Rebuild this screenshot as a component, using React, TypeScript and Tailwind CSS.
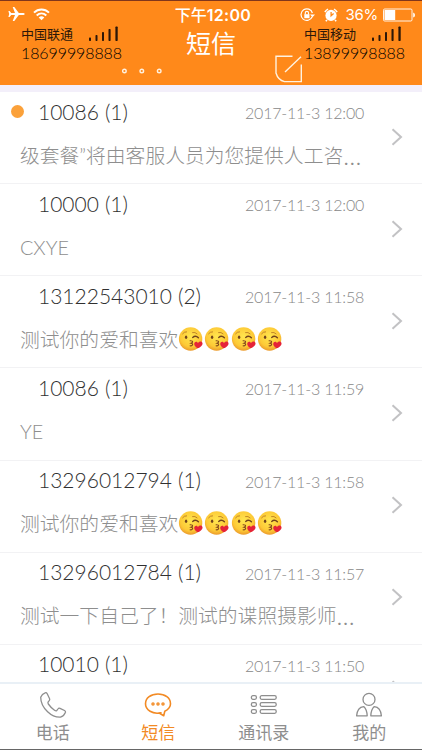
import type { ReactNode } from 'react';

type Message = {
  sender: string;
  count: number;
  date: string;
  text: string;
  truncated?: boolean;
  emojis?: number;
  unread?: boolean;
};

const messages: Message[] = [
  { sender: '10086', count: 1, date: '2017-11-3 12:00', text: '级套餐”将由客服人员为您提供人工咨', truncated: true, unread: true },
  { sender: '10000', count: 1, date: '2017-11-3 12:00', text: 'CXYE' },
  { sender: '13122543010', count: 2, date: '2017-11-3 11:58', text: '测试你的爱和喜欢', emojis: 4 },
  { sender: '10086', count: 1, date: '2017-11-3 11:59', text: 'YE' },
  { sender: '13296012794', count: 1, date: '2017-11-3 11:58', text: '测试你的爱和喜欢', emojis: 4 },
  { sender: '13296012784', count: 1, date: '2017-11-3 11:57', text: '测试一下自己了！测试的谍照摄影师', truncated: true },
  { sender: '10010', count: 1, date: '2017-11-3 11:50', text: '' },
];

function KissEmoji() {
  return (
    <svg width="26.2" height="26" viewBox="0 0 26 26" className="shrink-0">
      <defs>
        <radialGradient id="face" cx="0.5" cy="0.4" r="0.62">
          <stop offset="0" stopColor="#ffe64f" />
          <stop offset="0.7" stopColor="#fdc936" />
          <stop offset="1" stopColor="#e9952a" />
        </radialGradient>
      </defs>
      <circle cx="12.5" cy="13" r="11.7" fill="url(#face)" />
      <ellipse cx="8" cy="11.2" rx="1.2" ry="1.8" fill="#71431c" />
      <path d="M4.5 7.8Q6 5.6 8.5 5.8M14.5 6.5Q17 5.8 19 7.8" fill="none" stroke="#b97d25" strokeWidth="0.9" strokeLinecap="round" />
      <path d="M14.6 11.4Q17.5 8.8 20.3 11.8" fill="none" stroke="#71431c" strokeWidth="1.4" strokeLinecap="round" />
      <path d="M12 14.7Q15.2 14.6 14.3 16.4L12.8 17.2Q15.4 17.5 14.2 19.1Q13.5 20 12 19.8" fill="none" stroke="#80451b" strokeWidth="1.1" strokeLinecap="round" />
      <path d="M19.5 22.2C16.5 20.4 15.3 17.9 16.8 16.3C18 15.2 19.5 15.9 19.8 17.1C21 15 23.5 14.9 24.3 16.7C25.1 19 22.4 21.4 19.5 22.2Z" fill="#e52338" />
    </svg>
  );
}

function SignalBars() {
  return (
    <svg width="30" height="16" viewBox="0 0 30 16" className="shrink-0 fill-[#2c1708]">
      <rect x="0" y="11.5" width="2" height="3.5" rx="0.7" />
      <rect x="6.5" y="9" width="2" height="6" rx="0.7" />
      <rect x="13" y="6" width="2" height="9" rx="0.7" />
      <rect x="19.5" y="3" width="2.1" height="12" rx="0.7" />
      <rect x="26.4" y="0.5" width="2.3" height="14.5" rx="0.7" />
    </svg>
  );
}

function SimCard({ carrier, phone }: { carrier: string; phone: string }) {
  return (
    <div className="w-[101px] shrink-0 text-[#2c1708]">
      <div className="flex h-[16px] items-center justify-between pr-[3px]">
        <span className="whitespace-nowrap text-[13px] leading-[16px]">{carrier}</span>
        <SignalBars />
      </div>
      <div className="mt-px whitespace-nowrap font-['Lato',sans-serif] text-[16px] font-light leading-[20px] tracking-[-0.1px] text-black">
        {phone}
      </div>
    </div>
  );
}

function StatusBar() {
  return (
    <div className="grid h-[26px] grid-cols-[1fr_auto_1fr] items-center border-t border-[#81361b] pl-2 pr-[6px] text-white">
      <div className="flex items-center gap-[8px] pt-px">
        <svg width="17" height="16" viewBox="0 0 17 16" fill="white">
          <path d="M16.7 8C16.7 7.2 15.7 6.9 14.8 6.9H10.8L6.3 1.1H4.7L7 6.9H3.2L1.6 5H0.4L1.2 8L0.4 11H1.6L3.2 9.1H7L4.7 14.9H6.3L10.8 9.1H14.8C15.7 9.1 16.7 8.8 16.7 8Z" />
        </svg>
        <svg width="17" height="13" viewBox="0 0 17 13" fill="none" stroke="white" strokeWidth="2">
          <path d="M1 4.6C5.3 0.5 11.7 0.5 16 4.6M3.7 7.5C6.5 4.9 10.5 4.9 13.3 7.5" />
          <path d="M5.7 9.5Q8.5 7.2 11.3 9.5L8.5 12.3Z" fill="white" stroke="none" />
        </svg>
      </div>
      <div className="whitespace-nowrap pl-[2px] pt-[2px] text-[16px] font-medium leading-[22px]">
        下午<span className="font-['Inter','Noto_Sans_CJK_SC',sans-serif] font-semibold tracking-[0.3px]">12:00</span>
      </div>
      <div className="flex items-center justify-end pt-[2px]">
        <svg width="16" height="14" viewBox="0 0 16 14" fill="none" stroke="white" strokeWidth="1.2">
          <path d="M12.2 8.8A5.8 5.8 0 1 1 12.4 5" />
          <path d="M10 6.4H15L12.5 9.2Z" fill="white" stroke="none" />
          <rect x="4.3" y="6.2" width="5.2" height="4" fill="white" stroke="none" />
          <path d="M5.3 6.5V5A1.6 1.6 0 0 1 8.5 5V6.5" />
        </svg>
        <svg width="14" height="14" viewBox="0 0 14 14" className="ml-[8px]">
          <circle cx="7" cy="7.4" r="5.6" fill="white" />
          <path d="M0.9 4.1A7 7 0 0 1 4 1.1M10 1.1A7 7 0 0 1 13.1 4.1M3 12L1.8 13.3M11 12L12.2 13.3" fill="none" stroke="white" strokeWidth="1.6" />
          <path d="M7.1 4V7.7L9.6 5.4" fill="none" stroke="#ff891a" strokeWidth="1.3" />
        </svg>
        <span className="ml-[8px] font-['Inter',sans-serif] text-[15px] leading-[20px] tracking-[-0.3px]">36%</span>
        <svg width="33" height="14" viewBox="0 0 33 14" className="ml-[5px]">
          <rect x="0.5" y="1" width="28.5" height="12" rx="1.2" fill="none" stroke="white" strokeWidth="0.9" />
          <rect x="1.5" y="2" width="10.7" height="10" fill="white" />
          <path d="M30.2 4.5Q32 5 32 7Q32 9 30.2 9.5Z" fill="white" />
        </svg>
      </div>
    </div>
  );
}

function Header() {
  return (
    <header className="h-[85px] shrink-0 bg-[#ff891a]">
      <StatusBar />
      <div className="flex h-[59px] pl-[21px]">
        <SimCard carrier="中国联通" phone="18699998888" />
        <div className="flex items-end pb-[11px]">
          <svg width="41" height="6" viewBox="0 0 41 6" fill="none" stroke="#fff0de" strokeWidth="1.4">
            <circle cx="2.4" cy="3" r="1.8" />
            <circle cx="19.8" cy="3" r="1.8" />
            <circle cx="37.2" cy="3" r="1.8" />
          </svg>
        </div>
        <h1 className="ml-[23px] w-[50px] whitespace-nowrap text-[25px] leading-[34px] text-white">短信</h1>
        <svg width="28" height="28" viewBox="0 0 28 28" className="mb-[2px] ml-[39px] self-end" fill="none" stroke="#fff2e0" strokeWidth="1.4">
          <path d="M17.5 1.2H1V18Q3 25 9.5 26.6H26.3V9.5M10 17L26 1.8" />
        </svg>
        <div className="ml-px">
          <SimCard carrier="中国移动" phone="13899998888" />
        </div>
      </div>
    </header>
  );
}

function MessageRow({ message }: { message: Message }) {
  return (
    <li className="flex h-[92.15px] shrink-0 items-center border-b border-[#f2f2f4] pr-[19px]">
      <div className="-mt-[3px] flex h-[91px] min-w-0 flex-1 flex-col">
        <div className="flex h-[42px] items-center">
          <div className="flex w-[38px] pl-[11px]">
            {message.unread && <span className="h-[13px] w-[13px] rounded-full bg-[#fba13a]" />}
          </div>
          <div className="flex-1 whitespace-nowrap text-[21px] font-light leading-[26px] text-[#303030]">
            {message.sender}
            <span className="ml-[6px]">({message.count})</span>
          </div>
          <time className="mt-[3px] w-[134px] whitespace-nowrap text-[16px] font-light leading-[20px] tracking-[-0.2px] text-[#888]">
            {message.date}
          </time>
        </div>
        <div className="mt-[8px] flex h-[28px] items-center whitespace-nowrap pl-5 text-[19.8px] font-light leading-[28px] text-[#8e8e8e]">
          {message.text}
          {message.truncated && <span className="text-[25px] leading-[28px]">…</span>}
          {Array.from({ length: message.emojis ?? 0 }, (_, i) => (
            <KissEmoji key={i} />
          ))}
        </div>
      </div>
      <svg width="12" height="18" viewBox="0 0 12 18" className="mb-[2px] ml-[12px] shrink-0" fill="none" stroke="#c2c2c4" strokeWidth="2">
        <path d="M1.5 1.2L10 9L1.5 16.8" />
      </svg>
    </li>
  );
}

function Tab({ label, active, children }: { label: string; active?: boolean; children: ReactNode }) {
  return (
    <button className={`flex flex-1 flex-col items-center pt-[7px] ${active ? 'text-[#f28a24]' : 'text-[#8e8e8e]'}`}>
      <svg width="28" height="28" viewBox="0 0 28 28" fill="none" stroke="currentColor" strokeWidth="1.3" strokeLinejoin="round">
        {children}
      </svg>
      <span className="mt-[3px] text-[17px] leading-[22px]">{label}</span>
    </button>
  );
}

function TabBar() {
  return (
    <nav className="flex h-[68px] shrink-0 border-b border-t-2 border-b-[#666] border-t-[#e9f0f6] bg-white">
      <Tab label="电话">
        <path d="M6.2 1.8Q3 2.8 1.7 6.2Q1.7 14 8.6 20.8Q14.5 26.5 21.5 26.2Q25 25 26.5 21.2Q26.7 20.1 25.5 19.5L21 17.3Q19.7 16.8 18.9 18L17.7 19.7Q16.8 20.2 15.5 19.3Q12 16.8 9.3 13Q8.6 11.8 9.2 10.9L10.4 9.4Q11 8.5 10.5 7.5L8.2 2.7Q7.5 1.4 6.2 1.8Z" />
      </Tab>
      <Tab label="短信" active>
        <path d="M17 21.7C8.5 23.7 1.5 18.8 1.5 12.7C1.5 7 7 3 14 3S26.5 7 26.5 12.7C26.5 16.2 24.2 18.5 20.8 20.2L19.7 24.7L15.2 22Z" strokeWidth="1.6" />
        <circle cx="9" cy="12.9" r="1.1" />
        <circle cx="14" cy="12.9" r="1.1" />
        <circle cx="19" cy="12.9" r="1.1" />
      </Tab>
      <Tab label="通讯录">
        <rect x="1.4" y="4.7" width="5" height="3.6" rx="1.5" />
        <rect x="10.2" y="4.7" width="16" height="3.6" rx="1.5" />
        <rect x="1.4" y="11.7" width="5" height="3.6" rx="1.5" />
        <rect x="10.2" y="11.7" width="16" height="3.6" rx="1.5" />
        <rect x="1.4" y="18.7" width="5" height="3.6" rx="1.5" />
        <rect x="10.2" y="18.7" width="16" height="3.6" rx="1.5" />
      </Tab>
      <Tab label="我的">
        <circle cx="14" cy="8.4" r="6" />
        <path d="M8.7 15.6C4.5 16 2 20 1.6 24.8H12.2C12 20.5 10.7 17.4 8.7 15.6ZM19.3 15.6C23.5 16 26 20 26.4 24.8H15.8C16 20.5 17.3 17.4 19.3 15.6Z" />
      </Tab>
    </nav>
  );
}

export default function App() {
  return (
    <div className="flex h-[750px] w-[422px] flex-col overflow-hidden bg-white font-['Lato','Noto_Sans_CJK_SC',sans-serif]">
      <Header />
      <div className="h-[7px] shrink-0 bg-[#f3effa]" />
      <ul className="flex min-h-0 flex-1 flex-col overflow-hidden">
        {messages.map((message, i) => (
          <MessageRow key={i} message={message} />
        ))}
      </ul>
      <TabBar />
    </div>
  );
}
